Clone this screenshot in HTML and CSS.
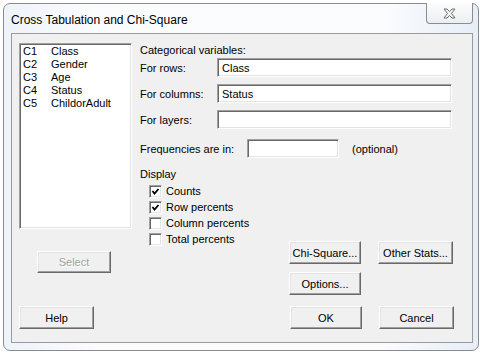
FILE: index.html
```html
<!DOCTYPE html>
<html lang="en">
  <head>
    <meta charset="UTF-8" />
    <title>Cross Tabulation and Chi-Square</title>
    <link rel="stylesheet" href="styles.css">
  </head>
  <body>
    <div class="window">
      <div class="titlebar">
        <span class="title">Cross Tabulation and Chi-Square</span>
        <button class="close" title="Close">
          <svg width="13" height="11" viewBox="0 0 13 11">
            <polygon points="1,1 4,1 6.5,3.5 9,1 12,1 8.5,5.5 12,10 9,10 6.5,7.5 4,10 1,10 4.5,5.5"
                     fill="#f2f2f2" stroke="#6e6e6e" stroke-width="1" stroke-linejoin="round" />
          </svg>
        </button>
      </div>

      <div class="client">
        <div class="main">
          <div class="left">
            <div class="listbox">
              <div class="item"><span>C1</span><span>Class</span></div>
              <div class="item"><span>C2</span><span>Gender</span></div>
              <div class="item"><span>C3</span><span>Age</span></div>
              <div class="item"><span>C4</span><span>Status</span></div>
              <div class="item"><span>C5</span><span>ChildorAdult</span></div>
            </div>
            <button class="btn select" disabled>Select</button>
          </div>

          <div class="right">
            <div class="caption">Categorical variables:</div>
            <div class="fields">
              <label for="rows">For rows:</label>
              <input type="text" id="rows" class="edit" value="Class" />
              <label for="cols">For columns:</label>
              <input type="text" id="cols" class="edit" value="Status" />
              <label for="layers">For layers:</label>
              <input type="text" id="layers" class="edit" value="" />
            </div>

            <div class="freq">
              <label for="freq">Frequencies are in:</label>
              <input type="text" id="freq" class="edit short" value="" />
              <span class="hint">(optional)</span>
            </div>

            <div class="lower">
              <div class="display">
                <div class="caption">Display</div>
                <div class="check"><span class="box checked"></span>Counts</div>
                <div class="check"><span class="box checked"></span>Row percents</div>
                <div class="check"><span class="box"></span>Column percents</div>
                <div class="check"><span class="box"></span>Total percents</div>
              </div>
              <div class="actions">
                <button class="btn narrow">Chi-Square...</button>
                <button class="btn">Other Stats...</button>
                <button class="btn narrow">Options...</button>
              </div>
            </div>
          </div>
        </div>

        <div class="footer">
          <button class="btn">Help</button>
          <div class="footer-right">
            <button class="btn narrow">OK</button>
            <button class="btn">Cancel</button>
          </div>
        </div>
      </div>
    </div>
  </body>
</html>
```

FILE: styles.css
```css
body {
  margin: 0;
  background: #ffffff;
  font-family: "Liberation Sans", Arial, sans-serif;
  font-size: 11px;
  color: #000;
}
.window {
  box-sizing: border-box;
  width: 476px;
  height: 348px;
  margin: 3px 0 0 3px;
  border: 1px solid #8a8a8a;
  border-radius: 7px;
  background: linear-gradient(to right, #eef3fa, #fbfcfe 20%, #fbfcfe 80%, #e6eef8);
  display: flex;
  flex-direction: column;
}
.titlebar {
  height: 29px;
  display: flex;
  justify-content: space-between;
  align-items: flex-start;
}
.title {
  margin: 9px 0 0 7px;
  font-size: 12px;
  line-height: 15px;
}
.close {
  box-sizing: border-box;
  width: 47px;
  height: 21px;
  margin: -1px 5px 0 0;
  padding: 0;
  border: 1px solid #8c8c8c;
  border-top: none;
  border-radius: 0 0 4px 4px;
  background: linear-gradient(#fdfdfd, #eceef1);
  display: flex;
  align-items: center;
  justify-content: center;
}
.client {
  box-sizing: border-box;
  width: 462px;
  height: 310px;
  margin-left: 7px;
  border: 1px solid #9a9a9a;
  background: #f0f0f0;
  display: flex;
  flex-direction: column;
}
.main {
  flex: 1;
  display: flex;
  padding: 9px 0 0 7px;
}
.left {
  width: 113px;
}
.listbox {
  box-sizing: border-box;
  height: 186px;
  padding: 1px 0 0 2px;
  background: #fff;
  border: 1px solid;
  border-color: #a0a0a0 #fff #fff #a0a0a0;
  box-shadow: inset 1px 1px #696969, inset -1px -1px #e3e3e3;
}
.item {
  display: flex;
  line-height: 13px;
}
.item span:first-child {
  width: 28px;
  padding-left: 1px;
}
.btn {
  box-sizing: border-box;
  width: 75px;
  height: 23px;
  padding: 0;
  font: inherit;
  color: #000;
  background: #f0f0f0;
  border: 1px solid;
  border-color: #fff #696969 #696969 #fff;
  box-shadow: inset -1px -1px #a0a0a0, inset 1px 1px #e3e3e3;
}
.btn.narrow {
  width: 72px;
}
.btn.select {
  width: 74px;
  height: 22px;
  margin: 22px 0 0 18px;
  color: #a0a0a0;
  text-shadow: 1px 1px #fff;
}
.right {
  margin-left: 8px;
  padding-top: 1px;
}
.caption {
  line-height: 13px;
}
.fields {
  display: grid;
  grid-template-columns: 77px 235px;
  grid-auto-rows: 19px;
  row-gap: 7px;
  margin-top: 1px;
  align-items: center;
}
.edit {
  box-sizing: border-box;
  height: 19px;
  margin: 0;
  padding: 0 0 0 4px;
  font: inherit;
  color: #000;
  background: #fff;
  border: 1px solid;
  border-color: #a0a0a0 #fff #fff #a0a0a0;
  box-shadow: inset 1px 1px #696969, inset -1px -1px #e3e3e3;
  outline: none;
}
.freq {
  display: flex;
  align-items: center;
  margin-top: 10px;
}
.freq label {
  width: 107px;
}
.edit.short {
  width: 92px;
}
.hint {
  margin-left: 13px;
}
.lower {
  display: flex;
  margin-top: 10px;
}
.display {
  width: 149px;
}
.display .caption {
  margin-bottom: 2px;
}
.check {
  display: flex;
  align-items: center;
  height: 16px;
  padding-left: 9px;
}
.box {
  box-sizing: border-box;
  width: 13px;
  height: 13px;
  margin-right: 4px;
  background: #fff;
  border: 1px solid;
  border-color: #a0a0a0 #fff #fff #a0a0a0;
  box-shadow: inset 1px 1px #696969, inset -1px -1px #e3e3e3;
}
.box.checked {
  background: #fff url("data:image/svg+xml,%3Csvg xmlns='http://www.w3.org/2000/svg' width='11' height='11'%3E%3Cpolyline points='2.5,5 4.5,7.5 8.5,3' fill='none' stroke='%23000' stroke-width='1.8'/%3E%3C/svg%3E") center / 11px 11px no-repeat;
}
.actions {
  display: grid;
  grid-template-columns: 72px 75px;
  grid-auto-rows: 23px;
  gap: 8px 17px;
  margin-top: 73px;
}
.footer {
  display: flex;
  align-items: flex-end;
  padding: 0 18px 13px 7px;
}
.footer-right {
  margin-left: auto;
  display: flex;
  gap: 17px;
}
```
